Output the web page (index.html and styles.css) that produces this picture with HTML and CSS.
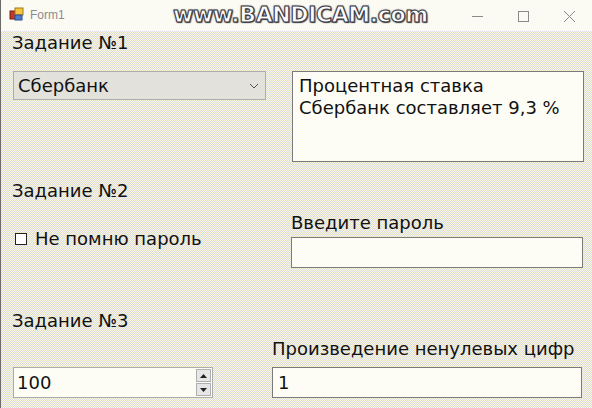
FILE: index.html
```html
<!DOCTYPE html>
<html lang="ru">
<head>
<meta charset="utf-8">
<title>Form1</title>
<link rel="stylesheet" href="styles.css">
</head>
<body>
<div class="window">
  <div class="titlebar">
    <svg class="app-icon" width="16" height="16" viewBox="0 0 16 16">
      <rect x="1" y="5" width="7" height="8" fill="#c0392b" stroke="#7a1a12" stroke-width="1"/>
      <rect x="6" y="2" width="8" height="7" fill="#f5c542" stroke="#a07a10" stroke-width="1"/>
      <rect x="6" y="9" width="7" height="5" fill="#4a7fd0" stroke="#2a4f90" stroke-width="1"/>
    </svg>
    <span class="title">Form1</span>
    <div class="controls">
      <svg class="ctl" width="46" height="30" viewBox="0 0 46 30"><line x1="18" y1="15.5" x2="29" y2="15.5" stroke="#8a8a8a" stroke-width="1"/></svg>
      <svg class="ctl" width="46" height="30" viewBox="0 0 46 30"><rect x="18.5" y="10.5" width="10" height="10" fill="none" stroke="#8a8a8a" stroke-width="1"/></svg>
      <svg class="ctl" width="46" height="30" viewBox="0 0 46 30"><path d="M18 10 L29 21 M29 10 L18 21" stroke="#8a8a8a" stroke-width="1"/></svg>
    </div>
    <div class="watermark">www.BANDICAM.com</div>
  </div>

  <div class="content">
    <section class="task">
      <div class="heading">Задание №1</div>
      <div class="row row-1">
        <div class="combo">
          <span class="combo-text">Сбербанк</span>
          <svg class="chevron" width="10" height="6" viewBox="0 0 10 6"><path d="M1 1 L5 5 L9 1" fill="none" stroke="#555" stroke-width="1"/></svg>
        </div>
        <div class="memo">Процентная ставка<br>Сбербанк составляет 9,3 %</div>
      </div>
    </section>

    <section class="task task-2">
      <div class="heading">Задание №2</div>
      <div class="row row-2">
        <label class="check"><span class="box"></span>Не помню пароль</label>
        <div class="field">
          <div class="label">Введите пароль</div>
          <div class="input"></div>
        </div>
      </div>
    </section>

    <section class="task task-3">
      <div class="heading">Задание №3</div>
      <div class="row row-3">
        <div class="numeric">
          <span class="num-text">100</span>
          <div class="spin">
            <div class="spin-btn"><svg width="7" height="4" viewBox="0 0 7 4"><path d="M0 4 L3.5 0 L7 4 Z" fill="#222"/></svg></div>
            <div class="spin-btn"><svg width="7" height="4" viewBox="0 0 7 4"><path d="M0 0 L3.5 4 L7 0 Z" fill="#222"/></svg></div>
          </div>
        </div>
        <div class="field field-3">
          <div class="label label-3">Произведение ненулевых цифр</div>
          <div class="input input-text">1</div>
        </div>
      </div>
    </section>
  </div>
</div>
</body>
</html>
```

FILE: styles.css
```css
* { box-sizing: border-box; }
html, body { margin: 0; padding: 0; }
body {
  width: 592px;
  height: 408px;
  overflow: hidden;
  font-family: "DejaVu Sans", sans-serif;
  color: #111;
}
.window {
  height: 408px;
  border-left: 1px solid #6b6b6b;
  background-color: #ecebdc;
  background-image: repeating-conic-gradient(#faf7d4 0 25%, #dcdce8 0 50%);
  background-size: 2px 2px;
}
.titlebar {
  position: relative;
  height: 31px;
  background: #fbfbf4;
  display: flex;
  align-items: center;
  padding-left: 8px;
}
.app-icon { margin-top: -3px; }
.title {
  font-family: "Liberation Sans", sans-serif;
  font-size: 12px;
  color: #8c8c8c;
  margin-left: 5px;
  margin-top: -2px;
}
.controls {
  margin-left: auto;
  display: flex;
}
.ctl { display: block; }
.watermark {
  position: absolute;
  left: 172px;
  top: 2px;
  font-family: "DejaVu Sans", sans-serif;
  font-weight: bold;
  font-size: 22px;
  letter-spacing: -0.4px;
  color: #fdfdfd;
  -webkit-text-stroke: 1px #3a3a46;
  text-shadow: 0 0 2px #2a2a36, 1px 1px 1px #555;
}
.content { padding-left: 11px; }
.heading {
  font-size: 18px;
  line-height: 24px;
  height: 24px;
  white-space: nowrap;
}
.row { display: flex; }
.row-1 { margin-top: 16px; align-items: flex-start; }
.combo {
  width: 253px;
  height: 29px;
  margin-left: 1px;
  border: 1px solid #acacac;
  background-color: #e2e1dc;
  display: flex;
  align-items: center;
  padding: 0 6px 0 4px;
  font-size: 18px;
}
.chevron { margin-left: auto; }
.memo {
  margin-left: 26px;
  width: 292px;
  height: 91px;
  border: 1px solid #7a7a7a;
  background: #fdfdf6;
  padding: 3px 6px;
  font-size: 18px;
  line-height: 22px;
}
.task-2 { margin-top: 17px; }
.row-2 { align-items: flex-start; }
.check {
  display: flex;
  align-items: center;
  width: 279px;
  margin-top: 24px;
  font-size: 18px;
  line-height: 24px;
}
.box {
  width: 12px;
  height: 12px;
  border: 1px solid #222;
  background: #fff;
  margin: 0 8px 0 3px;
}
.field { display: flex; flex-direction: column; }
.label { font-size: 18px; line-height: 24px; margin-top: 8px; white-space: nowrap; }
.label-3 { margin-top: 4px; margin-bottom: 4px; }
.input {
  margin-top: 2px;
  width: 292px;
  height: 31px;
  border: 1px solid #7a7a7a;
  background: #fdfdf6;
}
.task-3 { margin-top: 41px; }
.row-3 { align-items: flex-end; }
.numeric {
  width: 200px;
  height: 31px;
  margin-left: 1px;
  border: 1px solid #acacac;
  background: #fdfdf6;
  display: flex;
  align-items: center;
  padding-left: 3px;
  font-size: 18px;
}
.spin {
  margin-left: auto;
  margin-right: 1px;
  display: flex;
  flex-direction: column;
  gap: 1px;
}
.spin-btn {
  width: 15px;
  height: 13px;
  border: 1px solid #b0b0b0;
  background: #e6e6e6;
  display: flex;
  align-items: center;
  justify-content: center;
}
.field-3 { margin-left: 59px; }
.input-text {
  width: 310px;
  font-size: 18px;
  display: flex;
  align-items: center;
  padding-left: 5px;
}
```
